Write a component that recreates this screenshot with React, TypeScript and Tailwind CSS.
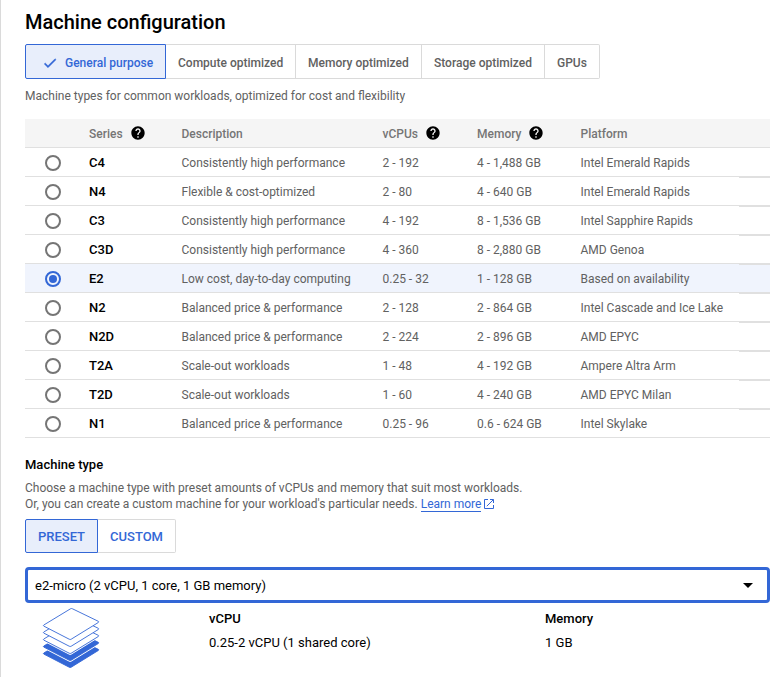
type Machine = {
  series: string;
  description: string;
  vcpus: string;
  memory: string;
  platform: string;
};

const machines: Machine[] = [
  { series: "C4", description: "Consistently high performance", vcpus: "2 - 192", memory: "4 - 1,488 GB", platform: "Intel Emerald Rapids" },
  { series: "N4", description: "Flexible & cost-optimized", vcpus: "2 - 80", memory: "4 - 640 GB", platform: "Intel Emerald Rapids" },
  { series: "C3", description: "Consistently high performance", vcpus: "4 - 192", memory: "8 - 1,536 GB", platform: "Intel Sapphire Rapids" },
  { series: "C3D", description: "Consistently high performance", vcpus: "4 - 360", memory: "8 - 2,880 GB", platform: "AMD Genoa" },
  { series: "E2", description: "Low cost, day-to-day computing", vcpus: "0.25 - 32", memory: "1 - 128 GB", platform: "Based on availability" },
  { series: "N2", description: "Balanced price & performance", vcpus: "2 - 128", memory: "2 - 864 GB", platform: "Intel Cascade and Ice Lake" },
  { series: "N2D", description: "Balanced price & performance", vcpus: "2 - 224", memory: "2 - 896 GB", platform: "AMD EPYC" },
  { series: "T2A", description: "Scale-out workloads", vcpus: "1 - 48", memory: "4 - 192 GB", platform: "Ampere Altra Arm" },
  { series: "T2D", description: "Scale-out workloads", vcpus: "1 - 60", memory: "4 - 240 GB", platform: "AMD EPYC Milan" },
  { series: "N1", description: "Balanced price & performance", vcpus: "0.25 - 96", memory: "0.6 - 624 GB", platform: "Intel Skylake" },
];

const tabs = [
  { label: "Compute optimized", width: "w-[130px]" },
  { label: "Memory optimized", width: "w-[126px]" },
  { label: "Storage optimized", width: "w-[123px]" },
  { label: "GPUs", width: "w-[55px]" },
];

const columns = "grid grid-cols-[64px_92.5px_201px_94.5px_103.5px_158.5px_31px]";

function Help() {
  return (
    <svg className="-mt-px ml-[7px] size-4 shrink-0" viewBox="0 0 24 24">
      <path
        fill="#000"
        d="M12 2C6.48 2 2 6.48 2 12s4.48 10 10 10 10-4.480 10-10S17.520 2 12 2zm1 17h-2v-2h2v2zm2.070-7.750-.9.920C13.450 12.900 13 13.500 13 15h-2v-.5c0-1.100.450-2.100 1.170-2.830l1.240-1.260c.370-.360.590-.860.590-1.410 0-1.100-.9-2-2-2s-2 .9-2 2H8c0-2.210 1.790-4 4-4s4 1.790 4 4c0 .880-.360 1.680-.930 2.250z"
      />
    </svg>
  );
}

function Radio({ checked }: { checked: boolean }) {
  return (
    <span
      className={`ml-5 flex size-4 items-center justify-center rounded-full border-2 ${
        checked ? "border-[#3367d6]" : "border-[#757575]"
      }`}
    >
      {checked && <span className="size-2 shrink-0 rounded-full bg-[#3367d6]" />}
    </span>
  );
}

function Stack() {
  const layer = "M.8 18.100Q0 17.600.8 17L27.500.8Q28.500.2 29.500.8L55.300 13.300Q56.300 13.900 55.300 14.500L28.200 31.200Q27.200 31.800 26.200 31.200Z";
  return (
    <svg className="h-[61px] w-[58px]" viewBox="-1 -1 58 61" fill="#fff" stroke="#3367d6" strokeWidth="0.9">
      <path d={layer} transform="translate(0 28)" fill="#3367d6" />
      <path d={layer} transform="translate(0 22)" stroke="#fff" />
      <path d={layer} transform="translate(0 21)" fill="#3367d6" />
      <path d={layer} transform="translate(0 15)" stroke="#fff" />
      <path d={layer} transform="translate(0 14)" />
      <path d={layer} transform="translate(0 7)" />
      <path d={layer} />
    </svg>
  );
}

export default function App() {
  return (
    <div className="h-[677px] w-[780px] overflow-hidden border-l border-[#dadada] bg-white pl-6 font-[Roboto,sans-serif] text-xs text-[#616161]">
      <h1 className="pt-[7px] text-[20px] leading-[30px] font-medium text-black">Machine configuration</h1>

      <div className="mt-[7px] flex h-[35px] font-medium">
        <button className="flex w-[141px] items-center rounded-l-[2px] border border-[#3367d6] bg-[#e8eefb] pl-4 pt-0.5 text-[#3367d6]">
          <svg className="mr-[7px] size-4" viewBox="0 0 24 24">
            <path fill="#3367d6" stroke="#3367d6" strokeWidth="0.7" d="M9 16.170 4.830 12l-1.420 1.410L9 19 21 7l-1.410-1.410z" />
          </svg>
          General purpose
        </button>
        {tabs.map((tab) => (
          <button
            key={tab.label}
            className={`${tab.width} border-y border-r border-[#dadada] pl-3 pt-0.5 text-left whitespace-nowrap last:rounded-r-[2px]`}
          >
            {tab.label}
          </button>
        ))}
      </div>

      <p className="mt-[9px] leading-4">Machine types for common workloads, optimized for cost and flexibility</p>

      <div className="mt-[15px] w-[745px]">
        <div className={`${columns} h-[29px] items-center border-b border-[#e0e0e0] bg-[#f5f5f5] pt-px font-medium text-[#757575]`}>
          <span />
          <span className="flex items-center">Series<Help /></span>
          <span>Description</span>
          <span className="flex items-center">vCPUs<Help /></span>
          <span className="flex items-center">Memory<Help /></span>
          <span>Platform</span>
        </div>
        {machines.map((m, i) => {
          const selected = m.series === "E2";
          return (
            <div
              key={m.series}
              className={`${columns} h-[29px] items-center border-b border-[#e0e0e0] ${selected ? "bg-[#f0f4fd]" : ""}`}
            >
              <span className="pt-[2px]"><Radio checked={selected} /></span>
              <span className="pt-[2px] text-[13px] leading-4 font-medium text-black">{m.series}</span>
              <span className="pt-[2px]">{m.description}</span>
              <span className="pt-[2px]">{m.vcpus}</span>
              <span className="pt-[2px]">{m.memory}</span>
              <span className="pt-[2px]">{m.platform}</span>
              <span className={`h-full ${i > 0 ? "border-t border-[#e0e0e0]" : ""}`} />
            </div>
          );
        })}
      </div>

      <h2 className="mt-[18px] text-[13px] leading-[18px] font-medium text-black">Machine type</h2>
      <p className="mt-1.5 leading-4">
        Choose a machine type with preset amounts of vCPUs and memory that suit most workloads.
        <br />
        Or, you can create a custom machine for your workload's particular needs.{" "}
        <a className="border-b border-[#3367d6] text-[#3367d6]">Learn more</a>
        <svg className="ml-[3px] inline size-[10px] align-[-1px]" viewBox="0 0 10 10" fill="none" stroke="#3367d6">
          <path d="M4 .5H.5V9.500H9.500V6M6 .5H9.500V4M9.300.7 2.800 7.200" />
        </svg>
      </p>

      <div className="mt-[7px] flex h-[34px] text-[13px] font-medium text-[#3367d6]">
        <button className="w-[73px] rounded-l-[2px] border border-[#3367d6] bg-[#e8eefb] pt-0.5">PRESET</button>
        <button className="w-[78px] rounded-r-[2px] border border-l-0 border-[#dadada] pt-0.5">CUSTOM</button>
      </div>

      <div className="mt-[14px] flex h-9 w-[745px] items-center justify-between rounded border-3 border-[#3367d6] pr-[14px] pl-[7px] text-[13px] text-black">
        <span className="pt-[2px]">e2-micro (2 vCPU, 1 core, 1 GB memory)</span>
        <svg className="h-[5px] w-[10px]" viewBox="0 0 10 5">
          <path d="M0 0H10L5 5Z" />
        </svg>
      </div>

      <div className="flex pt-1 text-[13px] text-black">
        <div className="w-[184px] pl-[17px]">
          <Stack />
        </div>
        <div className="w-[336px] pt-1">
          <div className="leading-4 font-medium">vCPU</div>
          <div className="mt-2 leading-4">0.25-2 vCPU (1 shared core)</div>
        </div>
        <div className="pt-1">
          <div className="leading-4 font-medium">Memory</div>
          <div className="mt-2 leading-4">1 GB</div>
        </div>
      </div>
    </div>
  );
}
